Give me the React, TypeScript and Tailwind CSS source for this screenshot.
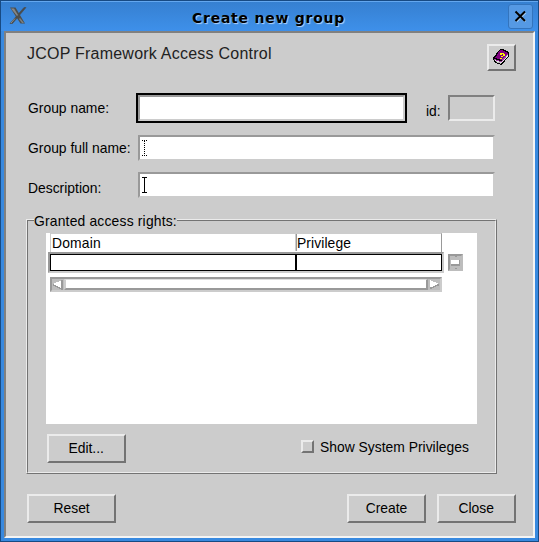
import type { ReactNode } from "react";

const raised = "border-2 border-t-[#ebebeb] border-l-[#ebebeb] border-r-[#737373] border-b-[#737373]";
const sunken = "border-2 border-t-[#999] border-l-[#999] border-r-[#ccc] border-b-[#ccc]";

function Label({ children, className = "" }: { children: ReactNode; className?: string }) {
  return (
    <span className={`block origin-left scale-x-[0.925] whitespace-nowrap text-[15px] leading-[20px] ${className}`}>
      {children}
    </span>
  );
}

function Button({ children, className = "" }: { children: ReactNode; className?: string }) {
  return (
    <button className={`flex h-[29px] shrink-0 items-center justify-center bg-[#ccc] pb-[2px] ${raised} ${className}`}>
      <span className="block scale-x-[0.925] text-[15px] leading-[20px]">{children}</span>
    </button>
  );
}

function XLogo() {
  return (
    <svg width="18" height="18" viewBox="0 0 18 18" className="mt-[5px] ml-[8px]">
      <path d="M15 .5h2L3.5 16.5H1z" fill="#4a4b4b" stroke="#4a4b4b" strokeWidth=".6" />
      <path d="M1 .5h5.5l9.5 16h-4.500z" fill="#4b4e4e" />
      <path d="M2 1.500h3l4 6.500-1 1z" fill="#85888a" />
      <path d="M11 11l4 5h-2l-3-4z" fill="#7d8080" />
      <path d="M2 16l4-4.500" stroke="#8b8d8b" />
    </svg>
  );
}

function BookIcon() {
  return (
    <svg width="17" height="17" viewBox="0 0 17 17" shapeRendering="crispEdges">
      <path d="M7 0h3l6 3v4l-7 9H8l-7-3-1-4z" fill="#000" />
      <path d="M1 10l7 3 7-8v2l-7 8-6-3z" fill="#e8e8e8" />
      <path d="M3 12l5 2v1l-5-2z" fill="#bbb" />
      <path d="M7 1h2l6 3-7 7-6-2z" fill="#800080" />
      <path d="M1 10l7 3 7-8" stroke="#a040a0" fill="none" />
      <path d="M7 4h4v1h1v2h-2v1H8V7h2V5H9v1H7zM7 9h2v1H7z" fill="#ff0" />
    </svg>
  );
}

function Arrow({ right = false }: { right?: boolean }) {
  return (
    <svg width="12" height="11" viewBox="0 0 12 11" shapeRendering="crispEdges">
      <path d="M0 0h12v11H0z" fill="#bdbdbd" />
      {right ? (
        <>
          <path d="M2 1l9 4-9 4z" fill="#fff" />
          <path d="M2 9.500l9-4" stroke="#999" strokeWidth="1.500" />
        </>
      ) : (
        <>
          <path d="M1 5L10 1v9z" fill="#fff" />
          <path d="M1 6l9 4V1" stroke="#999" strokeWidth="1.500" fill="none" />
        </>
      )}
    </svg>
  );
}

export default function App() {
  return (
    <div className="flex h-[542px] w-[539px] flex-col overflow-hidden border border-[#174a83] bg-[#3889df] font-['Liberation_Sans',Arial,sans-serif] text-black">
      <header className="flex h-[30px] shrink-0 border-t border-[#63a7ef] bg-linear-to-b from-[#3680d1] to-[#3e90ea]">
        <XLogo />
        <h1 className="ml-[165px] mt-[6px] w-[160px] whitespace-nowrap font-['DejaVu_Sans',sans-serif] text-[14px] font-bold leading-[20px] tracking-[0.75px] [text-shadow:1px_1px_1px_#b5d6fb]">
          Create new group
        </h1>
        <button className="ml-auto mr-[5px] mt-[2px] flex size-[25px] items-center justify-center rounded-[3px] border border-[#3374bd] bg-[#5599e4]">
          <svg width="13" height="13" viewBox="0 0 13 13">
            <path d="M2.5 2.5l9 9M11.5 2.5l-9 9" stroke="#a9cef5" strokeWidth="2" />
            <path d="M1.5 1.5l9.5 9.5M11 1.5L1.5 11" stroke="#000" strokeWidth="2" />
          </svg>
        </button>
      </header>

      <main className="ml-[3px] flex h-[507px] w-[531px] shrink-0 flex-col border-2 border-t-[#808080] border-l-[#808080] border-r-[#f4f4f4] border-b-[#f4f4f4] bg-[#ccc]">
        <div className="flex h-[60px] shrink-0 justify-between pl-[21px] pr-[17px] pt-[11px]">
          <h2 className="text-[16px] leading-[20px] tracking-[0.23px] text-[#222]">JCOP Framework Access Control</h2>
          <button className={`flex h-[27px] w-[29px] items-center justify-center ${raised}`}>
            <BookIcon />
          </button>
        </div>

        <div className="flex h-[42px] shrink-0 pl-[22px]">
          <Label className="mt-[5px] w-[108px]">Group name:</Label>
          <div className="h-[30px] w-[271px] border-2 border-black">
            <div className={`h-full bg-white ${sunken}`} />
          </div>
          <Label className="ml-[19px] mt-[8px] w-[22px]">id:</Label>
          <div className="mt-[2px] h-[26px] w-[47px] border-2 border-t-[#808080] border-l-[#808080] border-r-[#ebebeb] border-b-[#ebebeb]" />
        </div>

        <div className="flex h-[37px] shrink-0 pl-[22px]">
          <Label className="mt-[3px] w-[110px]">Group full name:</Label>
          <div className={`h-[26px] w-[357px] bg-white pl-[2px] pt-[3px] ${sunken}`}>
            <svg width="5" height="16" viewBox="0 0 5 16">
              <path d="M0 .5h5M2.5 1v14M0 15.5h5" stroke="#000" strokeDasharray="1 1" />
            </svg>
          </div>
        </div>

        <div className="flex h-[47px] shrink-0 pl-[22px]">
          <Label className="mt-[6px] w-[110px]">Description:</Label>
          <div className={`h-[26px] w-[357px] bg-white pl-[2px] pt-[3px] ${sunken}`}>
            <svg width="5" height="16" viewBox="0 0 5 16">
              <path d="M0 .5h5M2.5 0v16M0 15.5h5" stroke="#000" />
            </svg>
          </div>
        </div>

        <section className="ml-[20px] h-[255px] w-[471px] shrink-0 border border-t-[#ebebeb] border-l-[#ebebeb] border-r-[#737373] border-b-[#737373]">
          <div className="flex h-full flex-col border border-t-[#737373] border-l-[#737373] border-r-[#ebebeb] border-b-[#ebebeb] pl-[18px]">
            <div className="-ml-[12px] -mt-[10px] h-[22px] w-[143px] shrink-0 bg-[#ccc]">
              <Label className="tracking-[0.2px]">Granted access rights:</Label>
            </div>
            <div className="flex h-[191px] w-[431px] shrink-0 bg-white">
              <div className="ml-[2px] w-[396px]">
                <div className="ml-[2px] flex h-[19px] w-[392px] border-t border-r border-l border-t-[#ccc] border-r-[#999] border-l-[#ccc]">
                  <Label className="-mt-px ml-[1px] w-[243px] tracking-[0.2px]">Domain</Label>
                  <div className="h-[17px] w-[2px] border-l border-l-[#ccc] bg-[#999]" />
                  <Label className="-mt-px tracking-[0.1px]">Privilege</Label>
                </div>
                <div className={`h-[21px] w-[396px] ${sunken}`}>
                  <div className="flex h-[17px] border border-black">
                    <div className="w-[244px]" />
                    <div className="w-[2px] bg-black" />
                  </div>
                </div>
                <div className={`ml-[2px] mt-[4px] flex h-[15px] w-[392px] bg-[#bdbdbd] ${sunken}`}>
                  <Arrow />
                  <div className="h-[11px] flex-1 border-l-2 border-t border-r-2 border-b-2 border-l-[#ccc] border-t-[#ddd] border-r-[#999] border-b-[#999] bg-white" />
                  <Arrow right />
                </div>
              </div>
              <div className="ml-[4px] mt-[21px] flex h-[17px] w-[15px] flex-col items-center justify-between border-2 border-t-[#999] border-l-[#999] border-r-[#bdbdbd] border-b-[#bdbdbd] bg-[#bdbdbd]">
                <span className="h-px w-[2px] bg-[#999]" />
                <span className="h-[6px] w-[9px] border-r border-b-2 border-r-[#999] border-b-[#999] bg-white" />
                <span className="h-px w-[2px] bg-[#999]" />
              </div>
            </div>
            <div className="flex pl-[1px] pt-[10px]">
              <Button className="w-[79px]">Edit...</Button>
              <span className={`ml-[175px] mt-[6px] size-[13px] ${raised}`} />
              <Label className="ml-[6px] mt-[3px]">Show System Privileges</Label>
            </div>
          </div>
        </section>

        <footer className="flex pl-[21px] pt-[20px]">
          <Button className="w-[89px]">Reset</Button>
          <Button className="ml-[231px] w-[79px]">Create</Button>
          <Button className="ml-[11px] w-[79px]">Close</Button>
        </footer>
      </main>
    </div>
  );
}
